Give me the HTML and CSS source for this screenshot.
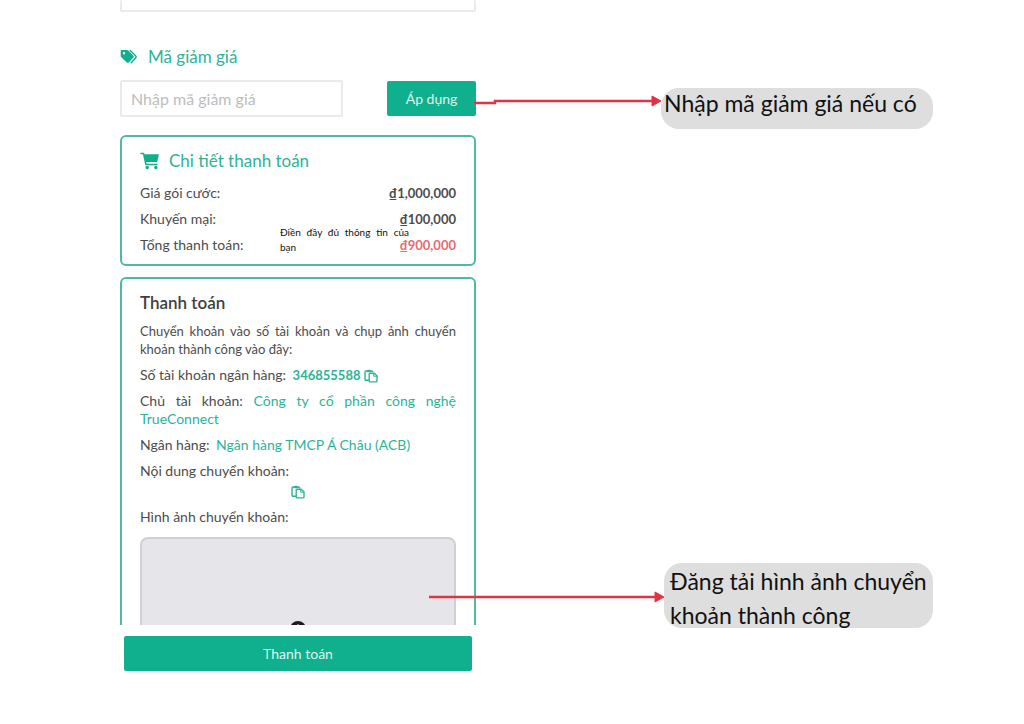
FILE: index.html
```html
<!DOCTYPE html>
<html lang="vi">
<head>
  <meta charset="UTF-8" />
  <meta name="viewport" content="width=device-width, initial-scale=1.0" />
  <title>Thanh toán</title>
  <link rel="stylesheet" href="styles.css">
</head>
<body>
  <svg class="icon-defs" aria-hidden="true">
    <symbol id="icon-copy" viewBox="0 0 14 14">
      <path d="M5 11.300H2.200A1.200 1.200 0 0 1 1 10.100V3.200A1.200 1.200 0 0 1 2.200 2H7.500A1.200 1.200 0 0 1 8.700 3.200" fill="none" stroke="currentColor" stroke-width="1.400"/>
      <path d="M2.800 1.300h1.200a1 1 0 0 1 1.900 0h1.200v1.900H2.800z" fill="currentColor"/>
      <path d="M6.200 4.200h3.900l2.900 2.600v5.100a1 1 0 0 1-1 1H6.200a1 1 0 0 1-1-1V5.200a1 1 0 0 1 1-1z" fill="none" stroke="currentColor" stroke-width="1.400"/>
      <path d="M9.700 4.200v3H13" fill="none" stroke="currentColor"/>
    </symbol>
  </svg>

  <main class="page">
    <div class="phone">
      <div class="screen">
        <input class="field field-cut" type="text" aria-label="Thông tin">

        <h2 class="section-title">
          <svg class="icon" viewBox="0 0 18 16"><path d="M1.500 1h5.700q.7 0 1.200.5l5 5.200q.9 1 0 1.900l-4.700 5q-1 .9-1.900 0L1.300 8.300Q.7 7.800.7 7V2Q.7 1 1.500 1zM4 3a1.200 1.200 0 1 0 0 2.400A1.200 1.200 0 0 0 4 3z" fill="currentColor" fill-rule="evenodd"/><path d="M10.300 1.600l5.500 5.300q.8.9 0 1.800l-4.600 5" fill="none" stroke="currentColor" stroke-width="1.400" stroke-linecap="round"/></svg>
          Mã giảm giá
        </h2>
        <form class="coupon">
          <input class="field coupon-input" type="text" placeholder="Nhập mã giảm giá" aria-label="Mã giảm giá">
          <button class="btn btn-apply" type="button">Áp dụng</button>
        </form>

        <section class="card summary">
          <h2 class="card-title">
            <svg class="icon cart" viewBox="0 0 20 18"><path d="M1 1.500h2.600l2.300 11h11" fill="none" stroke="currentColor" stroke-width="1.500" stroke-linecap="round" stroke-linejoin="round"/><path d="M4 2.200h15l-1.800 7.800H5.700z" fill="currentColor"/><circle cx="7.200" cy="15.500" r="1.700" fill="currentColor"/><circle cx="15.800" cy="15.500" r="1.700" fill="currentColor"/></svg>
            Chi tiết thanh toán
          </h2>
          <div class="row"><span>Giá gói cước:</span><strong>₫1,000,000</strong></div>
          <div class="row"><span>Khuyến mại:</span><strong>₫100,000</strong></div>
          <div class="row"><span>Tổng thanh toán:</span><strong class="total">₫900,000</strong></div>
          <p class="note">Điền đầy đủ thông tin của bạn</p>
        </section>

        <section class="card payment">
          <h2 class="payment-title">Thanh toán</h2>
          <p class="lead">Chuyển khoản vào số tài khoản và chụp ảnh chuyển khoản thành công vào đây:</p>
          <p>Số tài khoản ngân hàng: <strong class="value spaced">346855588</strong> <button class="copy" type="button" aria-label="Sao chép số tài khoản"><svg><use href="#icon-copy"/></svg></button></p>
          <p>Chủ tài khoản: <span class="value">Công ty cổ phần công nghệ TrueConnect</span></p>
          <p>Ngân hàng: <span class="value spaced">Ngân hàng TMCP Á Châu (ACB)</span></p>
          <p>Nội dung chuyển khoản:</p>
          <div class="copy-row"><button class="copy" type="button" aria-label="Sao chép nội dung"><svg><use href="#icon-copy"/></svg></button></div>
          <label for="proof">Hình ảnh chuyển khoản:</label>
          <label class="dropzone" for="proof">
            <svg viewBox="0 0 18 18"><circle cx="9" cy="9" r="8" fill="#1c1c1e"/><path d="M9 4.500v9M4.500 9h9" stroke="#e6e6ea" stroke-width="2"/></svg>
          </label>
          <input class="file-input" type="file" id="proof" accept="image/*">
        </section>
      </div>
      <div class="footer">
        <button class="btn btn-pay" type="button">Thanh toán</button>
      </div>
    </div>

    <!-- guide notes over the page -->
    <div class="guide guide-coupon">
      <svg class="arrow" width="187" height="14" viewBox="0 0 187 14"><path d="M0 9h21V7h158" fill="none" stroke="#e03444" stroke-width="2.500"/><path d="M178 2l9 5-9 5z" fill="#e03444" stroke="#e03444" stroke-linejoin="round"/></svg>
      <p class="callout">Nhập mã giảm giá nếu có</p>
    </div>
    <div class="guide guide-upload">
      <svg class="arrow" width="235" height="14" viewBox="0 0 235 14"><path d="M0 7h228" fill="none" stroke="#e03444" stroke-width="2.500"/><path d="M226 2l9 5-9 5z" fill="#e03444" stroke="#e03444" stroke-linejoin="round"/></svg>
      <p class="callout callout-tall">Đăng tải hình ảnh chuyển<br>khoản thành công</p>
    </div>
  </main>
</body>
</html>
```

FILE: styles.css
```css
* { margin: 0; padding: 0; box-sizing: border-box; }
body {
  font-family: Lato, 'Noto Sans', sans-serif;
  font-size: 14px;
  line-height: 18px;
  background: #fff;
  color: #4c4c4c;
}
button, input {
  font-family: inherit;
  font-size: 14px;
}
.icon-defs {
  position: absolute;
  width: 0;
  height: 0;
}
.page {
  position: relative;
  height: 100vh;
  padding-left: 120px;
  overflow: hidden;
}
.phone {
  width: 100%;
  max-width: 356px;
  height: 100%;
  display: flex;
  flex-direction: column;
}
.screen {
  flex: 1;
  min-height: 0;
  overflow: hidden;
}
.field {
  display: block;
  border: 2px solid #ebebeb;
  border-radius: 2px;
  background: #fff;
  padding: 0 9px;
}
.field-cut {
  width: 100%;
  height: 12px;
  border-top: none;
}
.section-title, .card-title {
  display: flex;
  align-items: center;
  font-size: 17px;
  font-weight: 400;
  line-height: 24px;
  color: #2db398;
}
.section-title {
  gap: 10px;
  margin: 33px 0 11px;
}
.icon {
  width: 18px;
  height: 16px;
  color: #10b08e;
}
.cart {
  width: 20px;
  height: 18px;
}
.coupon {
  display: flex;
  justify-content: space-between;
  align-items: center;
}
.coupon-input {
  width: 223px;
  height: 37px;
  font-size: 16px;
}
.coupon-input::placeholder {
  color: #bdbdbd;
}
.btn {
  height: 35px;
  border: none;
  border-radius: 2px;
  background: #10b08e;
  color: #dff5ef;
  cursor: pointer;
}
.btn-apply {
  width: 89px;
}
.card {
  position: relative;
  border: 2px solid #4dbaa4;
  border-radius: 6px;
  padding: 12px 18px 10px;
}
.summary {
  margin: 18px 0 11px;
}
.card-title {
  gap: 9px;
  margin-bottom: 11px;
}
.row {
  display: flex;
  justify-content: space-between;
}
.row + .row {
  margin-top: 8px;
}
strong {
  font-size: 13px;
  font-weight: 700;
}
.row .total {
  color: #e76a70;
}
.note {
  position: absolute;
  left: 158px;
  top: 88px;
  width: 129px;
  font-size: 10px;
  line-height: 15px;
  color: #111;
  text-align: justify;
}
.payment-title {
  font-size: 17px;
  font-weight: 600;
  line-height: 24px;
  color: #404040;
  margin-bottom: 7px;
}
.payment p {
  text-align: justify;
  margin-bottom: 8px;
}
.payment .lead {
  font-size: 13px;
}
.value {
  color: #2db398;
}
.spaced {
  margin-left: 3px;
}
.copy {
  width: 14px;
  height: 14px;
  border: none;
  background: none;
  color: #2db398;
  vertical-align: middle;
  cursor: pointer;
}
.copy svg {
  display: block;
  width: 14px;
  height: 14px;
}
.copy-row {
  display: flex;
  justify-content: center;
  align-items: center;
  height: 16px;
  margin: -4px 0 8px;
}
.dropzone {
  display: flex;
  justify-content: center;
  align-items: center;
  height: 184px;
  margin-top: 11px;
  border: 2px solid #d0d0d4;
  border-radius: 8px;
  background: #e6e6ea;
  cursor: pointer;
}
.dropzone svg {
  width: 18px;
  height: 18px;
}
.file-input {
  display: none;
}
.footer {
  padding: 11px 4px 53px;
}
.btn-pay {
  display: block;
  width: 100%;
}
.guide {
  position: absolute;
  display: flex;
}
.guide-coupon {
  left: 474px;
  top: 88px;
}
.guide-upload {
  left: 429px;
  top: 563px;
}
.arrow {
  flex: none;
  margin-top: 6px;
}
.guide-upload .arrow {
  margin-top: 27px;
}
.callout {
  width: 272px;
  height: 41px;
  padding-left: 3px;
  border-radius: 18px;
  background: #dedede;
  color: #111;
  font-size: 23px;
  line-height: 30px;
  white-space: nowrap;
}
.callout-tall {
  width: 269px;
  height: 65px;
  padding: 1px 0 0 6px;
  line-height: 34px;
}
```
